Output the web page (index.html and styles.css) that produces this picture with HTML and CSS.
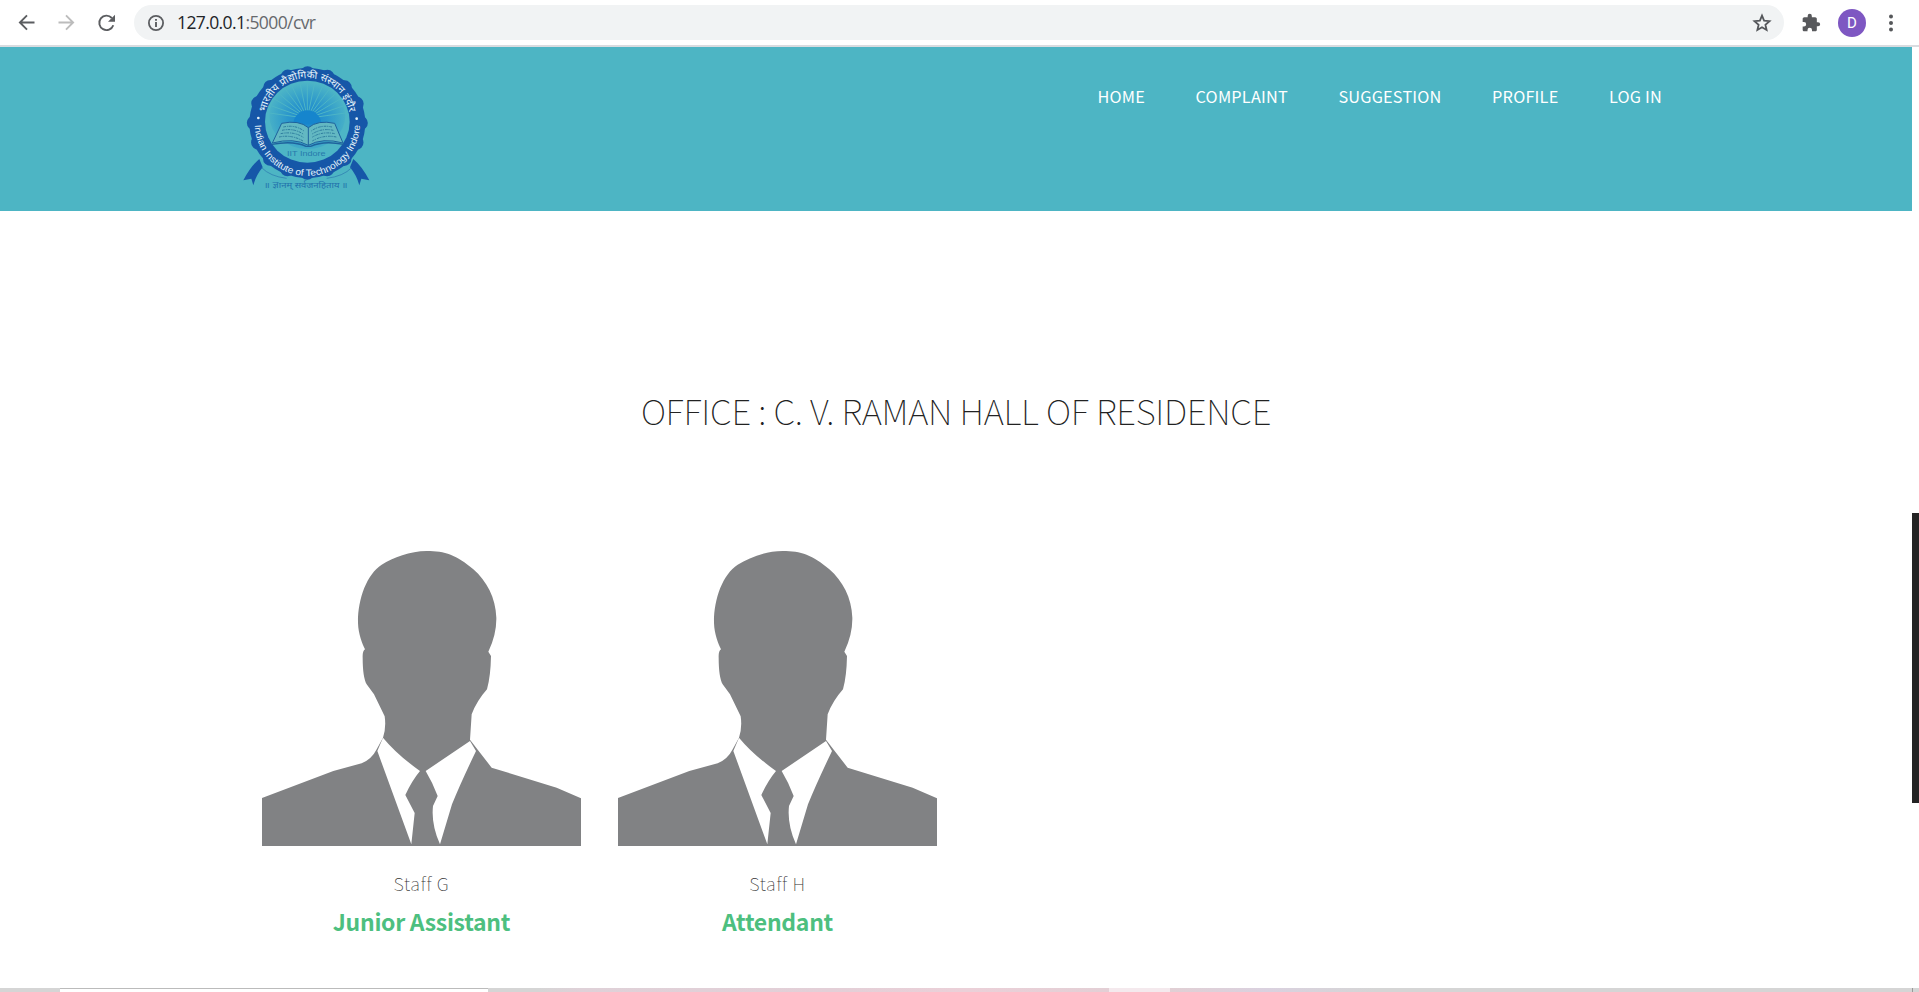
FILE: index.html
```html
<!DOCTYPE html>
<html lang="en">
<head>
<meta charset="utf-8">
<title>C. V. Raman Hall of Residence</title>
<link rel="stylesheet" href="styles.css">
</head>
<body>
<div class="toolbar">
  <svg class="nav-icons" viewBox="0 0 134 45" fill="none" stroke="#5b5d60" stroke-width="1.9">
    <path d="M34.5 22.5H20M27 15.4l-7.1 7.1 7.1 7.1"/>
    <path stroke="#bcbcbc" d="M58.5 22.5H73M66 15.4l7.1 7.1-7.1 7.1"/>
    <path d="M113.3 25.2A7.2 7.2 0 1 1 111.8 18"/>
    <path fill="#5b5d60" stroke="none" d="M115 14.8v7h-7z"/>
  </svg>
  <div class="address">
    <svg class="info" viewBox="0 0 18 18" fill="none" stroke="#5b5d60"><circle cx="9" cy="9" r="7.1" stroke-width="1.8"/><path stroke-width="1.9" d="M9 8v5M9 4.9v1.9"/></svg>
    <span class="url"><b>127.0.0.1</b>:5000/cvr</span>
    <svg class="star" viewBox="0 0 20 20" fill="none" stroke="#54565a" stroke-width="1.8"><path d="M10 2.600l2.100 5 5.400.5-4.100 3.600 1.200 5.300L10 14.200 5.400 17l1.200-5.300-4.100-3.600 5.400-.5z"/></svg>
  </div>
  <svg class="puzzle" viewBox="0 0 24 24" fill="#58595c"><path d="M20.5 11H19V7c0-1.100-.9-2-2-2h-4V3.500a2.500 2.500 0 0 0-5 0V5H4c-1.100 0-2 .9-2 2v3.800h1.500a2.700 2.700 0 0 1 0 5.400H2V20c0 1.100.9 2 2 2h3.800v-1.500a2.700 2.700 0 0 1 5.400 0V22H17c1.100 0 2-.9 2-2v-4h1.500a2.500 2.500 0 0 0 0-5z"/></svg>
  <span class="profile-dot">D</span>
  <svg class="more" viewBox="0 0 6 20" fill="#55575a"><circle cx="3" cy="3.500" r="2"/><circle cx="3" cy="10" r="2"/><circle cx="3" cy="16.500" r="2"/></svg>
</div>

<div class="viewport">
  <div class="page">
    <header class="header">
      <svg class="logo" viewBox="0 0 450 435">
        <defs>
          <path id="arc-top" d="M106 220A128 128 0 1 1 358 220"/>
          <path id="arc-bottom" d="M74 205A158 158 0 0 0 390 205"/>
          <radialGradient id="glow" cx=".5" cy=".55" r=".55"><stop offset="0" stop-color="#1685cd"/><stop offset=".45" stop-color="#2a96cc"/><stop offset="1" stop-color="#4db5c6"/></radialGradient>
        </defs>
        <g fill="#1657a8">
          <path d="M88 312q-26 22-48 64l24-5 6 20q8-30 28-54z"/>
          <path d="M370 312q26 22 48 64l-24-5-6 20q-8-30-28-54z"/>
        </g>
        <path fill="none" stroke="#2874ae" stroke-width="2" d="M95 338q25 26 75 32M365 338q-25 26-75 32"/>
        <ellipse cx="232" cy="204" rx="174" ry="165" fill="#1657a8"/>
        <ellipse cx="232" cy="204" rx="160" ry="149" fill="none" stroke="#1657a8" stroke-width="43" stroke-linecap="round" pathLength="160" stroke-dasharray="0 10"/>
        <ellipse cx="232" cy="200" rx="127" ry="123" fill="#4db5c6"/>
        <ellipse cx="232" cy="182" rx="114" ry="100" fill="url(#glow)"/>
        <g fill="none" stroke="#4db5c6" stroke-width="3">
          <path d="M232 190V80M232 190L210 84M232 190l22-106M232 190L184 90M232 190l48-100M232 190l-68-90M232 190l68-90M232 190l-87-76M232 190l87-76M232 190l-102-60M232 190l102-60M232 190l-110-38M232 190l110-38M232 190l-114-16M232 190l114-16"/>
        </g>
        <path fill="#1685cd" d="M190 208a42 42 0 0 1 84 0z"/>
        <path fill="#63b8c2" stroke="#1e629d" stroke-width="3" stroke-linejoin="round" d="M235 218q-28-24-80-13l-28 59q65-17 108 7 42-24 104-7l-25-59q-50-11-79 13v53"/>
        <path fill="none" stroke="#1e629d" stroke-width="4" d="M125 268q66-12 103 6h14q38-18 99-6"/>
        <path fill="none" stroke="#2e7e9f" stroke-width="3" stroke-dasharray="8 3 4 2" d="M160 216q35-8 62 12M156 226q35-8 65 12M152 236q38-8 68 11M147 246q38-8 72 12M306 216q-35-8-62 12M310 226q-35-8-65 12M314 236q-38-8-68 11M319 246q-38-8-72 12"/>
        <text class="logo-name" x="229" y="304" textLength="116" lengthAdjust="spacingAndGlyphs">IIT Indore</text>
        <g fill="#e5f3fa"><circle cx="85" cy="189" r="4"/><circle cx="380" cy="191" r="4"/></g>
        <text class="logo-hindi"><textPath href="#arc-top" startOffset="50%" textLength="350" lengthAdjust="spacingAndGlyphs">भारतीय प्रौद्योगिकी संस्थान इंदौर</textPath></text>
        <text class="logo-english"><textPath href="#arc-bottom" startOffset="50%" textLength="486" lengthAdjust="spacingAndGlyphs">Indian Institute of Technology Indore</textPath></text>
        <text class="logo-motto" x="228" y="400" textLength="250" lengthAdjust="spacingAndGlyphs">॥ ज्ञानम् सर्वजनहिताय ॥</text>
      </svg>
      <nav class="menu"><a>HOME</a><a>COMPLAINT</a><a>SUGGESTION</a><a>PROFILE</a><a>LOG IN</a></nav>
    </header>
    <main class="office">
      <h1>OFFICE : C. V. RAMAN HALL OF RESIDENCE</h1>
      <div class="staff">
        <article class="card">
          <svg class="avatar" viewBox="36 45 957 900">
            <g id="person">
              <path fill="#818284" d="M530 60C480 60 430 80 395 101C350 130 323 205 324 276C325 310 337 338 345 355Q337 360 338 380C338 420 342 445 350 460L372 490L404 556Q409 590 399 620L380 655Q365 685 335 697L250 720L36 801V945H993V802L920 770L725 710L682 655L660 626L665 550Q680 510 711 475Q722 435 723 375L715 362Q740 310 739 260C737 200 710 150 670 115C620 72 585 60 530 60z"/>
              <path fill="#fff" d="M399 620Q440 670 510 720Q485 750 466 792L494 846L484 940L382 660zM660 630L678 660Q630 760 606 820L570 940Q543 880 549 825L563 795Q548 755 527 720z"/>
            </g>
          </svg>
          <p class="name">Staff G</p>
          <p class="role">Junior Assistant</p>
        </article>
        <article class="card">
          <svg class="avatar" viewBox="36 45 957 900"><use href="#person"/></svg>
          <p class="name">Staff H</p>
          <p class="role">Attendant</p>
        </article>
      </div>
    </main>
  </div>
  <div class="scroll-track"><div class="scroll-thumb"></div></div>
</div>
<div class="taskbar"><i class="search"></i><i class="apps"></i><i class="active"></i><i class="tray"></i></div>
</body>
</html>
```
FILE: styles.css
```css
* { box-sizing: border-box; }
body { margin: 0; width: 1919px; height: 992px; overflow: hidden; background: #fff; display: flex; flex-direction: column; font-family: "Noto Sans CJK SC", sans-serif; }
.toolbar { height: 47px; flex: none; display: flex; align-items: center; border-bottom: 2px solid #d9dce0; }
.nav-icons { width: 134px; height: 45px; }
.address { width: 1650px; height: 35px; border-radius: 18px; background: #f1f3f4; display: flex; align-items: center; padding: 0 12px 0 13px; }
.info { width: 18px; height: 18px; }
.url { margin: -2px 0 0 12px; font: 17.5px "Open Sans", sans-serif; letter-spacing: -0.6px; color: #66696d; }
.url b { font-weight: 400; color: #222427; }
.star { width: 20px; height: 20px; margin-left: auto; }
.puzzle { width: 20px; height: 20px; margin-left: 17px; }
.profile-dot { width: 28px; height: 28px; margin-left: 17px; border-radius: 50%; background: #7e57c2; color: #fff; font: 15px/28px Roboto, sans-serif; text-align: center; }
.more { width: 6px; height: 20px; margin-left: 22px; }
.viewport { height: 941px; display: flex; }
.page { width: 1912px; }
.header { height: 164px; background: #4db5c4; display: flex; justify-content: space-between; padding: 8px 250px 0 230px; }
.logo { width: 150px; height: 145px; }
.logo text { font-family: "Liberation Sans", "Noto Sans", sans-serif; text-anchor: middle; }
.logo .logo-name { font-size: 20px; fill: #2779ac; }
.logo-hindi { font-size: 30px; fill: #e5f3fa; }
.logo-english { font-size: 28px; fill: #e5f3fa; }
.logo-motto { font-size: 24px; fill: #1f6fab; }
.menu { display: flex; gap: 50.5px; padding-top: 28px; height: 60px; color: #fff; font-size: 16.3px; line-height: 26px; letter-spacing: 0.2px; white-space: nowrap; }
.office { padding-top: 164px; }
h1 { margin: 0; text-align: center; font-size: 35px; line-height: 70px; font-weight: 100; letter-spacing: -0.28px; color: #222; white-space: nowrap; }
.staff { display: flex; gap: 37px; padding: 101px 0 0 262px; }
.card { width: 319px; text-align: center; }
.avatar { display: block; width: 319px; height: 300px; }
.name { margin: 23px 0 0; font-size: 18px; line-height: 28px; font-weight: 100; letter-spacing: 0.7px; color: #333; }
.role { margin: 6px 0 0; font-size: 23px; line-height: 36px; font-weight: 700; letter-spacing: -0.3px; color: #4dbf7f; }
.scroll-track { width: 7px; padding-top: 466px; }
.scroll-thumb { height: 290px; background: #242424; }
.taskbar { height: 4px; display: flex; background: #d5d5d5; }
.search { width: 428px; margin-left: 60px; background: #fff; border-top: 1px solid #bbb; }
.apps { width: 621px; background: linear-gradient(90deg, #d5d5d5 8%, #dfd1d8 15%, #e3cfd7 55%, #ebd0d8 77%, #e3cfd5); }
.active { width: 61px; background: #f4e9ed; }
.tray { width: 743px; border-right: 1px solid #999; background: linear-gradient(90deg, #e1cfd4, #dad1df 13%, #d5d5d5 28%); }
```
